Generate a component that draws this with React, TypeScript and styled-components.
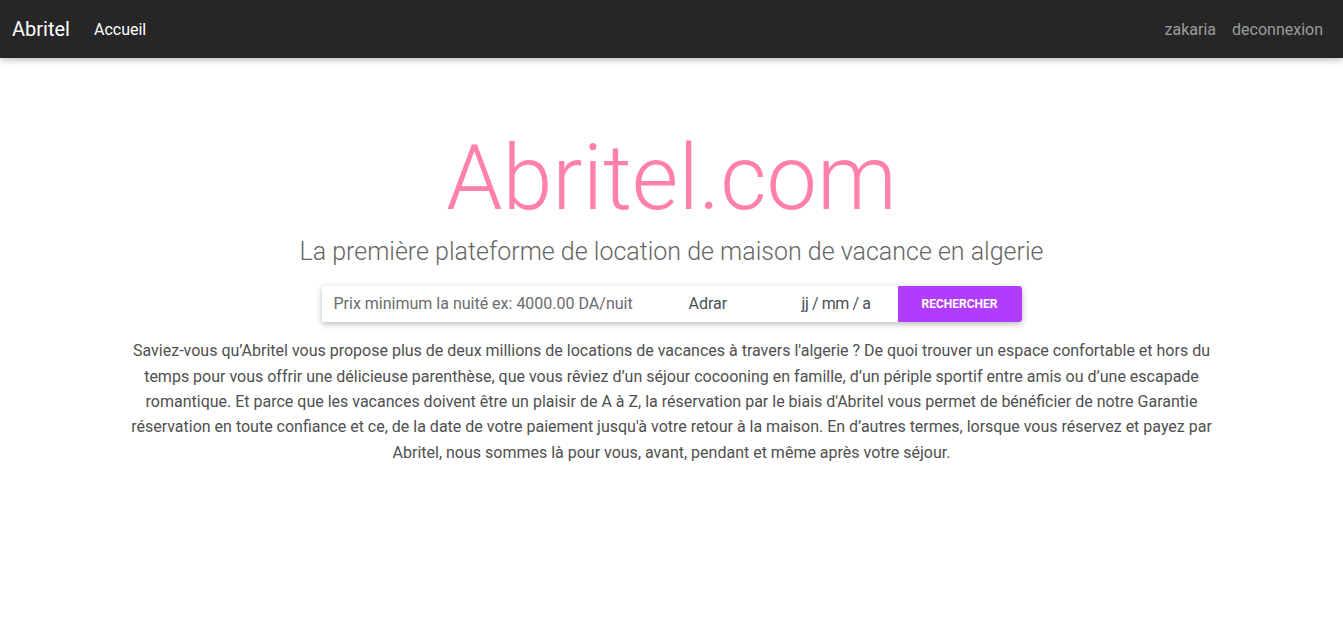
import React from "react";
import styled, { createGlobalStyle } from "styled-components";

const Global = createGlobalStyle`
  * { box-sizing: border-box; }
  body {
    margin: 0;
    font-family: Roboto, "Liberation Sans", sans-serif;
    background: #fff;
  }
`;

const Nav = styled.nav`
  height: 58px;
  background: #262626;
  display: flex;
  align-items: center;
  padding: 0 20px 0 12px;
  box-shadow: 0 2px 5px rgba(0,0,0,0.16), 0 2px 10px rgba(0,0,0,0.12);
`;

const Brand = styled.a`
  color: #fff;
  font-size: 20px;
  margin-right: 24px;
  text-decoration: none;
`;

const NavLink = styled.a<{ $muted?: boolean }>`
  color: ${(p) => (p.$muted ? "rgba(255,255,255,0.55)" : "#fff")};
  font-size: 16px;
  text-decoration: none;
`;

const Spacer = styled.div`
  flex: 1;
`;

const Right = styled.div`
  display: flex;
  gap: 16px;
`;

const Main = styled.main`
  max-width: 1140px;
  margin: 0 auto;
  padding: 64px 15px 0;
  display: flex;
  flex-direction: column;
  align-items: center;
`;

const Title = styled.h1`
  font-size: 90px;
  font-weight: 300;
  line-height: 113.2px;
  color: #ff80ab;
  margin: 0;
`;

const Subtitle = styled.p`
  font-size: 25px;
  font-weight: 300;
  color: #666;
  margin: 1px 0 19px;
  line-height: 32px;
`;

const SearchBar = styled.form`
  width: 700px;
  height: 36px;
  display: flex;
  box-shadow: 0 2px 5px rgba(0,0,0,0.16), 0 2px 10px rgba(0,0,0,0.12);
  border-radius: 2px;
  margin-bottom: 16px;
  margin-top: -1px;
`;

const Field = styled.div<{ $w: number; $pl: number; $color: string; $ls?: number }>`
  width: ${(p) => p.$w}px;
  padding-left: ${(p) => p.$pl}px;
  padding-bottom: 2px;
  display: flex;
  align-items: center;
  font-size: 16px;
  letter-spacing: ${(p) => p.$ls ?? 0}px;
  white-space: pre;
  color: ${(p) => p.$color};
`;

const Button = styled.button`
  width: 124px;
  border: none;
  background: #b23cfd;
  color: #fff;
  font-family: Roboto, "Liberation Sans", sans-serif;
  font-size: 12px;
  font-weight: 700;
  text-transform: uppercase;
  border-radius: 0 3px 3px 0;
  padding: 0;
`;

const Text = styled.p`
  margin: 0;
  text-align: center;
  font-size: 16px;
  line-height: 25.4px;
  color: #4f4f4f;
`;

export default function App() {
  return (
    <>
      <Global />
      <Nav>
        <Brand>Abritel</Brand>
        <NavLink>Accueil</NavLink>
        <Spacer />
        <Right>
          <NavLink $muted>zakaria</NavLink>
          <NavLink $muted>deconnexion</NavLink>
        </Right>
      </Nav>
      <Main>
        <Title>Abritel.com</Title>
        <Subtitle>La première plateforme de location de maison de vacance en algerie</Subtitle>
        <SearchBar>
          <Field $w={350} $pl={12} $color="#6c6c6c">Prix minimum la nuité ex: 4000.00 DA/nuit</Field>
          <Field $w={113} $pl={17} $color="#495057">Adrar</Field>
          <Field $w={113} $pl={17} $color="#495057" $ls={-0.4}>jj / mm / a</Field>
          <Button type="button">Rechercher</Button>
        </SearchBar>
        <Text>
          Saviez-vous qu’Abritel vous propose plus de deux millions de locations de vacances à travers l'algerie ? De quoi trouver un espace confortable et hors du temps pour vous offrir une délicieuse parenthèse, que vous rêviez d’un séjour cocooning en famille, d’un périple sportif entre amis ou d’une escapade romantique. Et parce que les vacances doivent être un plaisir de A à Z, la réservation par le biais d'Abritel vous permet de bénéficier de notre Garantie réservation en toute confiance et ce, de la date de votre paiement jusqu'à votre retour à la maison. En d’autres termes, lorsque vous réservez et payez par Abritel, nous sommes là pour vous, avant, pendant et même après votre séjour.
        </Text>
      </Main>
    </>
  );
}
